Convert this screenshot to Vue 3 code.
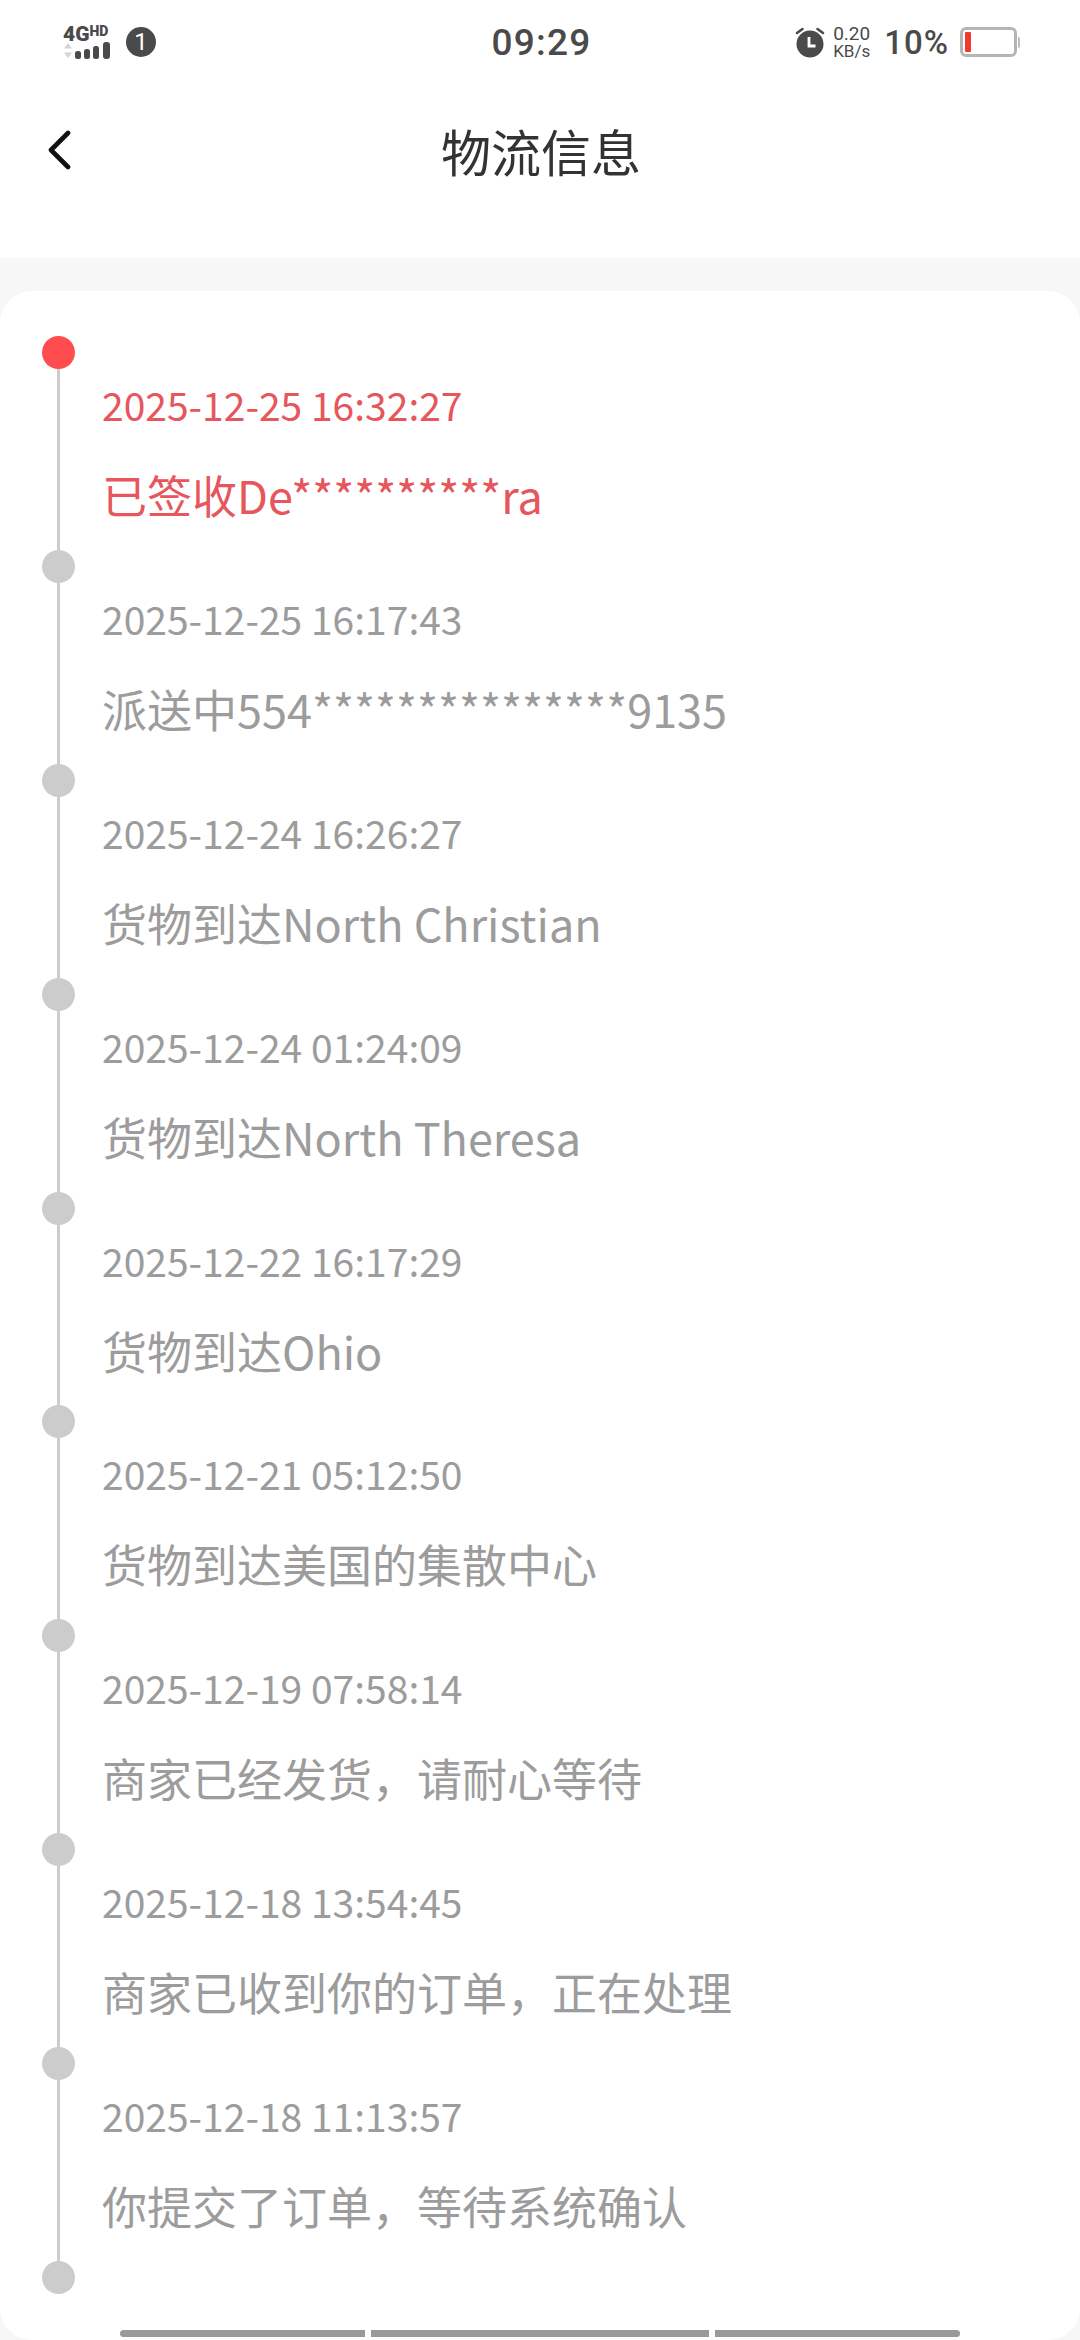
<template>
  <div class="page">
    <div class="top">
      <div class="status">
        <div class="status-left">
          <div class="net">
            <div class="net-type"><span class="g">4G</span><span class="hd">HD</span></div>
            <svg class="signal" width="47" height="17" viewBox="0 0 47 17">
              <path d="M5 1 L9 6.5 H1 Z M5 16 L9 10.5 H1 Z" fill="#d4d4d4" />
              <rect x="12" y="9" width="6" height="8" rx="2.5" fill="#4a4a4a" />
              <rect x="21" y="7" width="6" height="10" rx="2.5" fill="#4a4a4a" />
              <rect x="30" y="4" width="6" height="13" rx="2.5" fill="#4a4a4a" />
              <rect x="40" y="0" width="7" height="17" rx="3" fill="#4a4a4a" />
            </svg>
          </div>
          <div class="sim">1</div>
        </div>
        <div class="time">09:29</div>
        <div class="status-right">
          <svg class="alarm" width="30" height="32" viewBox="0 0 30 32">
            <circle cx="15" cy="18" r="13.5" fill="#4a4a4a" />
            <path d="M14 11 V20 H20.5" fill="none" stroke="#fff" stroke-width="2.8" />
            <path d="M2 7 L7.5 3 M28 7 L22.5 3" stroke="#4a4a4a" stroke-width="2.6" stroke-linecap="round" />
          </svg>
          <div class="speed"><span class="rate">0.20</span><span class="unit">KB/s</span></div>
          <div class="percent">10%</div>
          <div class="battery"><div class="level"></div></div>
          <div class="tip"></div>
        </div>
      </div>
      <div class="nav">
        <svg class="back" width="26" height="40" viewBox="0 0 26 40">
          <path d="M22 3 L5 20 L22 37" fill="none" stroke="#111" stroke-width="4.6" stroke-linecap="round" stroke-linejoin="round" />
        </svg>
        <div class="title">物流信息</div>
      </div>
    </div>

    <div class="card">
      <div
        v-for="(item, i) in list"
        :key="item.time"
        class="item"
        :class="{ active: i === 0 }"
      >
        <div class="rail">
          <div class="dot"></div>
          <div v-if="i < list.length - 1" class="line"></div>
        </div>
        <div class="info" v-if="item.time">
          <div class="date">{{ item.time }}</div>
          <div class="text">{{ item.text }}</div>
        </div>
      </div>
      <div class="scrollbar">
        <span class="seg seg1"></span>
        <span class="seg seg2"></span>
        <span class="seg seg3"></span>
      </div>
    </div>
  </div>
</template>

<script setup>
const list = [
  { time: '2025-12-25 16:32:27', text: '已签收De**********ra' },
  { time: '2025-12-25 16:17:43', text: '派送中554***************9135' },
  { time: '2025-12-24 16:26:27', text: '货物到达North Christian' },
  { time: '2025-12-24 01:24:09', text: '货物到达North Theresa' },
  { time: '2025-12-22 16:17:29', text: '货物到达Ohio' },
  { time: '2025-12-21 05:12:50', text: '货物到达美国的集散中心' },
  { time: '2025-12-19 07:58:14', text: '商家已经发货\uFF0C请耐心等待' },
  { time: '2025-12-18 13:54:45', text: '商家已收到你的订单\uFF0C正在处理' },
  { time: '2025-12-18 11:13:57', text: '你提交了订单\uFF0C等待系统确认' },
  { time: '', text: '' },
]
</script>

<style>
body {
  margin: 0;
  background: #f7f7f7;
}
</style>

<style scoped>
.page {
  width: 1080px;
  height: 2340px;
  overflow: hidden;
  background: #f7f7f7;
  display: flex;
  flex-direction: column;
  font-family: "Noto Sans CJK SC", "Noto Sans", sans-serif;
}

.top {
  flex: none;
  height: 258px;
  background: #fff;
}

.status {
  height: 84px;
  padding: 0 60px 0 63px;
  display: flex;
  align-items: center;
  justify-content: space-between;
  color: #4a4a4a;
  font-family: Roboto, "Liberation Sans", sans-serif;
}

.status-left {
  width: 330px;
  display: flex;
  align-items: center;
  gap: 16px;
}

.net {
  width: 47px;
  display: flex;
  flex-direction: column;
}

.net-type {
  display: flex;
  align-items: flex-start;
  height: 16px;
  line-height: 16px;
  font-weight: 900;
  white-space: nowrap;
}

.g {
  font-size: 21px;
}

.hd {
  font-size: 14px;
  line-height: 11px;
}

.sim {
  width: 30px;
  height: 30px;
  border-radius: 50%;
  background: #4a4a4a;
  color: #fff;
  font-size: 24px;
  line-height: 30px;
  text-align: center;
}

.time {
  font-size: 37px;
  font-weight: 500;
  letter-spacing: 1.2px;
}

.status-right {
  width: 330px;
  display: flex;
  align-items: center;
  justify-content: flex-end;
}

.alarm {
  margin-right: 8px;
}

.speed {
  display: flex;
  flex-direction: column;
  align-items: center;
  gap: 3px;
  margin-right: 14px;
}

.rate {
  font-size: 19px;
  line-height: 14px;
}

.unit {
  font-size: 17px;
  line-height: 14px;
}

.percent {
  font-size: 33px;
  font-weight: 500;
  letter-spacing: 1px;
  margin-right: 11px;
}

.battery {
  width: 57px;
  height: 30px;
  box-sizing: border-box;
  border: 3px solid #b5b5b5;
  border-radius: 6px;
  padding: 2px;
  display: flex;
}

.level {
  width: 6px;
  background: #ee3b2e;
  border-radius: 1px;
}

.tip {
  width: 2px;
  height: 11px;
  margin-left: 1px;
  background: #bdbdbd;
  border-radius: 0 2px 2px 0;
}

.nav {
  height: 131px;
  padding-left: 46px;
  display: flex;
  align-items: center;
  position: relative;
}

.title {
  position: absolute;
  left: 2px;
  right: 0;
  top: 30px;
  text-align: center;
  font-size: 50px;
  line-height: 72px;
  color: #333;
}

.card {
  flex: 1;
  min-height: 0;
  margin-top: 33px;
  padding: 45px 0 0 42px;
  background: #fff;
  border-radius: 32px;
  position: relative;
}

.item {
  height: 213.9px;
  display: flex;
}

.item:last-of-type {
  height: 33px;
}

.rail {
  width: 33px;
  display: flex;
  flex-direction: column;
  align-items: center;
}

.dot {
  width: 33px;
  height: 33px;
  flex: none;
  border-radius: 50%;
  background: #ccc;
}

.line {
  flex: 1;
  width: 3px;
  background: #ccc;
}

.active .dot {
  background: #ff4d4f;
}

.info {
  margin-left: 27px;
  padding-top: 43px;
  color: #9c9c9c;
}

.active .info {
  color: #e6565c;
}

.date {
  font-size: 39px;
  line-height: 50px;
}

.text {
  margin-top: 33px;
  font-size: 45px;
  line-height: 66px;
}

.scrollbar {
  position: absolute;
  left: 120px;
  bottom: 3px;
  display: flex;
  gap: 6px;
}

.seg {
  height: 7px;
  background: #999;
}

.seg1 {
  width: 245px;
  border-radius: 4px 0 0 4px;
}

.seg2 {
  width: 338px;
}

.seg3 {
  width: 245px;
  border-radius: 0 4px 4px 0;
}
</style>
